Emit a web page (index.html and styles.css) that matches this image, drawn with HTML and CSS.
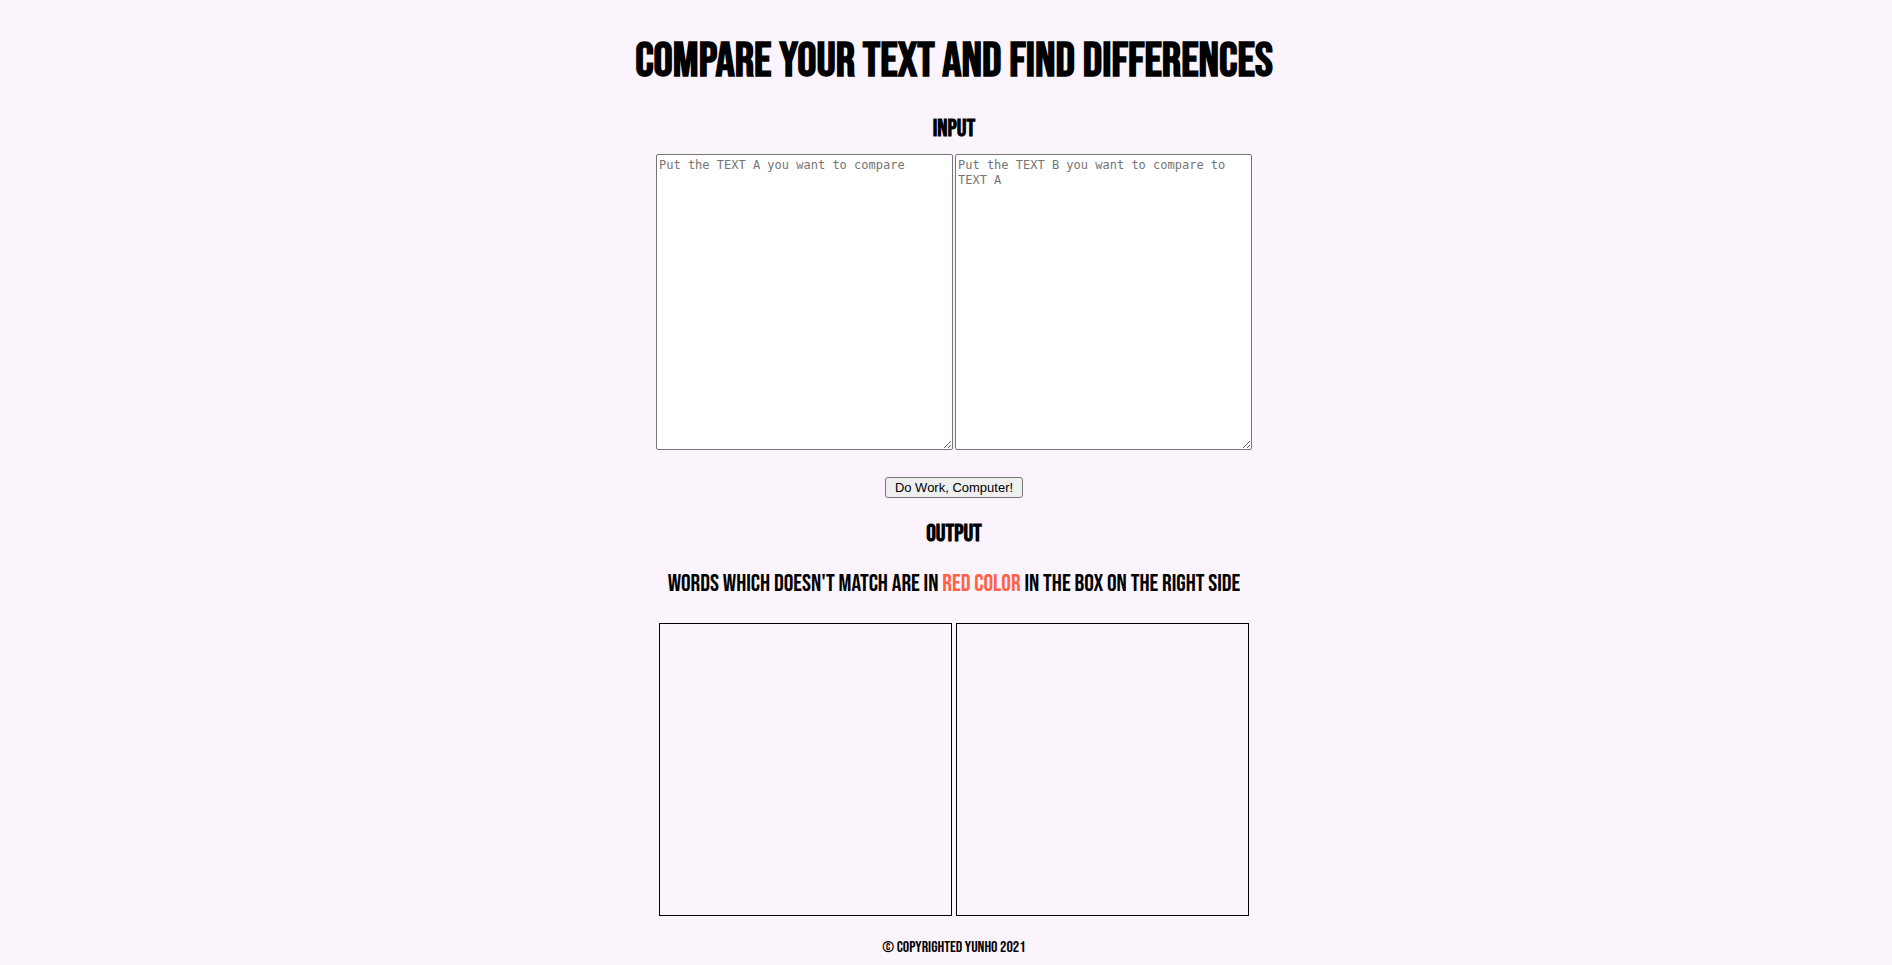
FILE: index.html
```html
<!DOCTYPE html>
<html lang="en">
<head>
<meta charset="utf-8">
<title>Compare your text</title>
<link rel="stylesheet" href="styles.css">
</head>
<body>
<main class="page">
  <h1 class="title">COMPARE YOUR TEXT AND FIND DIFFERENCES</h1>
  <form class="form">
    <h2 class="heading">INPUT</h2>
    <div class="inputs">
      <textarea class="field" aria-label="Text A" placeholder="Put the TEXT A you want to compare"></textarea>
      <textarea class="field" aria-label="Text B" placeholder="Put the TEXT B you want to compare to TEXT A"></textarea>
    </div>
    <button class="submit" type="button">Do Work, Computer!</button>
  </form>
  <h2 class="heading">OUTPUT</h2>
  <p class="hint">WORDS WHICH DOESN'T MATCH ARE IN <span class="red">RED COLOR</span> IN THE BOX ON THE RIGHT SIDE</p>
  <div class="outputs">
    <div class="result"></div>
    <div class="result"></div>
  </div>
</main>
<footer class="footer">© COPYRIGHTED YUNHO 2021</footer>
</body>
</html>
```
FILE: styles.css
```css
body {
  margin: 0;
  padding-left: 16px;
  background: #fbf4fc;
  color: #000;
  font-family: "Bebas Neue", "Liberation Sans Narrow", "Liberation Sans", sans-serif;
  text-align: center;
}
.page, .form {
  display: flex;
  flex-direction: column;
  align-items: center;
}
.title {
  margin: 32px 0 23px;
  font-size: 48px;
  line-height: 60px;
}
.heading {
  margin: 0;
  font-size: 24px;
  line-height: 28px;
}
.inputs {
  display: flex;
  gap: 2px;
  margin: 11px 0 27px;
}
.field {
  box-sizing: border-box;
  width: 297px;
  height: 296px;
  margin: 0;
  padding: 3px 2px;
  border: 1px solid #767676;
  border-radius: 2px;
  background: #fff;
  font-family: "DejaVu Sans Mono", monospace;
  font-size: 12px;
  line-height: 15px;
}
.field::placeholder { color: #757575; }
.submit {
  box-sizing: border-box;
  height: 21px;
  margin: 0 0 22px;
  padding: 0 9px;
  border: 1px solid #767676;
  border-radius: 3px;
  background: #efefef;
  color: #000;
  font-family: "Liberation Sans", Arial, sans-serif;
  font-size: 13px;
}
.hint {
  margin: 21px 0 24px;
  font-size: 24px;
  line-height: 30px;
}
.red { color: tomato; }
.outputs {
  display: flex;
  gap: 4px;
}
.result {
  box-sizing: border-box;
  width: 293px;
  height: 293px;
  border: 1px solid #000;
}
.footer {
  margin-top: 21px;
  font-size: 16px;
  line-height: 22px;
}
```
